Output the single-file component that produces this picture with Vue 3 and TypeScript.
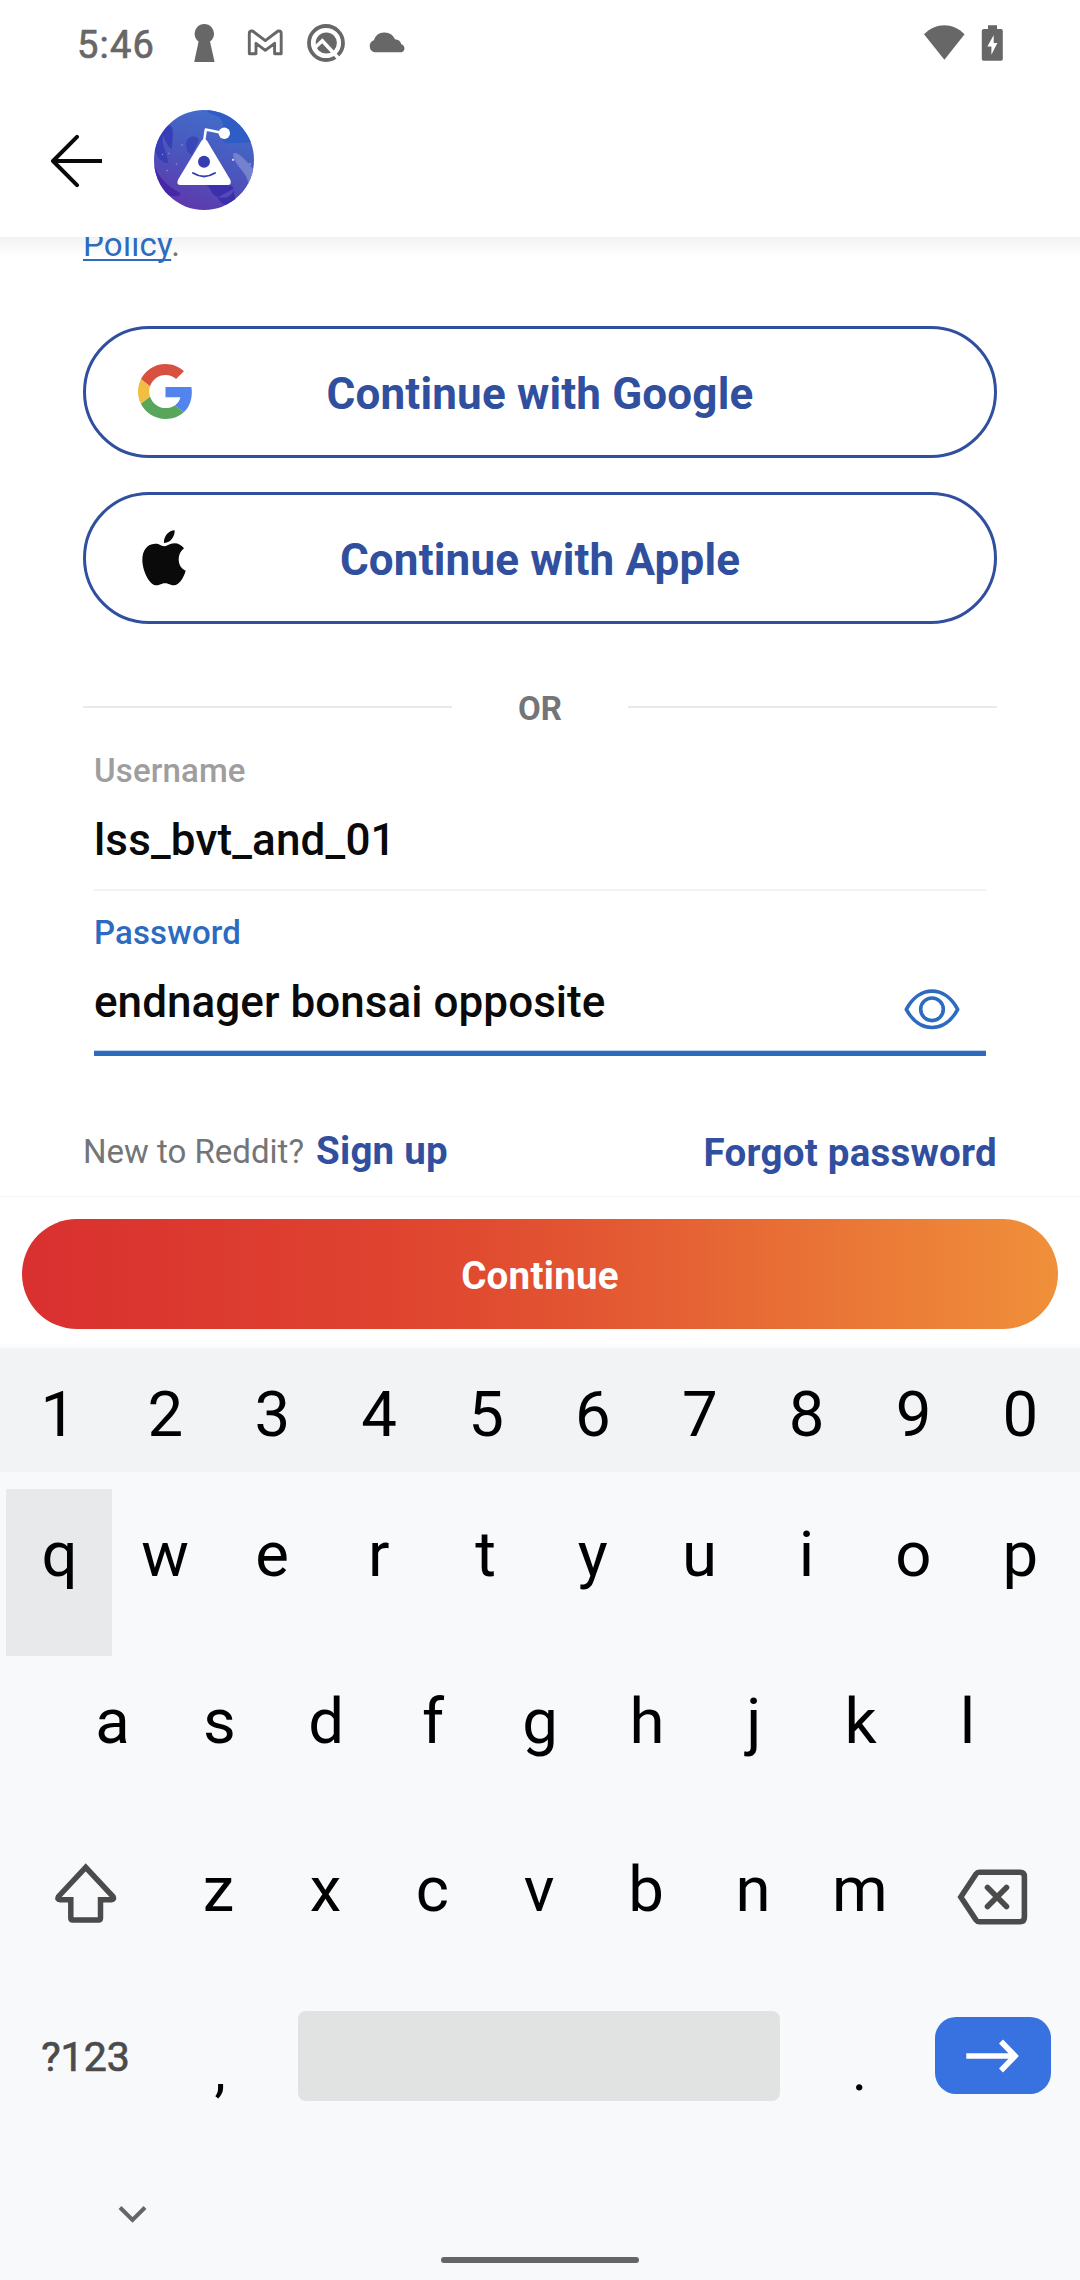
<script setup lang="ts">
const digits: string[] = '1234567890'.split('')
const topRow: string[] = 'qwertyuiop'.split('')
const homeRow: string[] = 'asdfghjkl'.split('')
const bottomRow: string[] = 'zxcvbnm'.split('')
</script>

<template>
  <div class="screen">
    <div class="status">
      <span class="clock">5:46</span>
      <svg class="i-key" width="22" height="40" viewBox="193 23 22 40" fill="#676767">
        <path d="M198.6 41.5A9.7 9.7 0 1 1 210 41.5L214.6 62H194.2Z" />
      </svg>
      <svg class="i-mail" width="36" height="28" viewBox="247 28 36 28" fill="none" stroke="#676767" stroke-width="2.9" stroke-linejoin="round">
        <path d="M249.3 33.5Q249.3 31 251.6 31H252.6L265.3 40.6L278 31H279Q281.2 31 281.2 33.5V53.8H274.6V43.3L265.3 50.3L256 43.3V53.8H249.3Z" />
      </svg>
      <svg class="i-q" width="40" height="40" viewBox="306 23 40 40" fill="none">
        <circle cx="326" cy="43" r="17" stroke="#676767" stroke-width="3.800" />
        <circle cx="326.300" cy="43" r="10.600" fill="#676767" />
        <path d="M314.500 48L322.300 40.800L341.500 61.500" stroke="#fff" stroke-width="3.600" />
      </svg>
      <svg class="i-cloud" width="38" height="22" viewBox="368 31 38 22" fill="#676767">
        <path d="M374.5 52.3A6.3 6.3 0 0 1 373.8 40.3A11.4 11.4 0 0 1 395 39.3A6.9 6.9 0 0 1 401.3 44.2A4.3 4.3 0 0 1 401.8 52.3Z" />
      </svg>
      <svg class="i-wifi" width="42" height="36" viewBox="923 24 42 36" fill="#676767">
        <path d="M924 34.3C936 22.3 952.6 22.3 964.6 34.3L944.4 59.7Z" />
      </svg>
      <svg class="i-bat" width="22" height="37" viewBox="981 25 22 37">
        <path d="M988 25.3H997V29H1001Q1002.8 29 1002.8 31V59Q1002.8 60.8 1001 60.8H983.7Q981.8 60.8 981.8 59V31Q981.8 29 983.7 29H988Z" fill="#676767" />
        <path d="M993.7 35V43H997.4L991.4 54.8V46.6H987.4Z" fill="#fff" />
      </svg>
    </div>

    <header class="bar">
      <svg width="54" height="54" viewBox="50 133.500 54 54" fill="none" stroke="#0a0a0a" stroke-width="4">
        <path d="M52.500 160.500H102" />
        <path d="M77 136.300L53 160.500L77 184.700" stroke-linecap="round" stroke-linejoin="round" />
      </svg>
      <svg class="avatar" width="100" height="100" viewBox="0 0 100 100">
        <defs>
          <linearGradient id="sky" x1="0.7" y1="0" x2="0.3" y2="1">
            <stop offset="0" stop-color="#416fcb" />
            <stop offset="0.5" stop-color="#4a57bd" />
            <stop offset="1" stop-color="#6037ad" />
          </linearGradient>
          <clipPath id="disc"><circle cx="50" cy="50" r="50" /></clipPath>
        </defs>
        <g clip-path="url(#disc)">
          <rect width="100" height="100" fill="url(#sky)" />
          <path d="M53 0C56 7 67 3 69 14C70 22 65 29 71 33C80 34 90 32 100 32V0Z" fill="#2f5dc5" />
          <path d="M16 15C21 19 18 28 18 39C13 37 12 30 9 26C7 36 14 44 14 53C8 54 3 46 0 40V20Z" fill="#373fb8" />
          <path d="M32 34C32 26 42 24 45 30L38 45C34 44 32 39 32 34Z" fill="#3946b8" />
          <path d="M0 55C5 68 13 76 26 83C28 87 19 87 14 85L0 72Z" fill="#4527a7" />
          <path d="M51 75C58 76 55 84 64 87C71 90 81 86 79 77C76 74 66 75 51 75ZM64 87L79 79L82 92L72 95C68 94 64 90 64 87Z" fill="#3b2fac" />
          <path d="M79 45C80 40 88 45 99 59V75L94 74C95 64 80 55 79 45Z" fill="#7381cf" />
          <g fill="#8797df">
            <circle cx="28" cy="35" r=".8" /><circle cx="8.500" cy="44.500" r=".7" />
            <circle cx="15" cy="43.500" r=".7" /><circle cx="22.500" cy="54" r=".8" />
            <circle cx="13" cy="60.500" r=".8" /><circle cx="96" cy="54" r="1" />
          </g>
          <circle cx="79" cy="49.800" r="1.100" fill="#dfe5fb" />
        </g>
        <path d="M50 32L51.800 19.500L70 23.300" fill="none" stroke="#fff" stroke-width="2.500" stroke-linejoin="round" />
        <circle cx="70.300" cy="23.300" r="5.700" fill="#fff" />
        <path d="M47.500 30.800Q50 27 53 30.800L76.300 69.800Q78 75 73.500 75H26.500Q22 75 24 69.800Z" fill="#fff" />
        <circle cx="50" cy="51.700" r="6" fill="#353db3" />
        <path d="M39 63Q50 69.800 61 63" fill="none" stroke="#353db3" stroke-width="2" stroke-linecap="round" />
      </svg>
    </header>

    <main class="content">
      <p class="policy"><a>Policy</a>.</p>
      <div class="providers">
        <button class="provider">
          <svg class="p-icon" width="55" height="55" viewBox="0 0 48 48">
            <path fill="#d85140" d="M24 9.500c3.540 0 6.710 1.220 9.210 3.600l6.850-6.850C35.900 2.380 30.470 0 24 0 14.620 0 6.510 5.380 2.560 13.220l7.980 6.190C12.430 13.720 17.740 9.500 24 9.500z" />
            <path fill="#5383ec" d="M46.980 24.550c0-1.570-.15-3.090-.38-4.550H24v9.020h12.940c-.58 2.960-2.260 5.480-4.780 7.180l7.730 6c4.510-4.180 7.090-10.360 7.090-17.650z" />
            <path fill="#f1bd42" d="M10.530 28.590c-.48-1.450-.76-2.990-.76-4.590s.27-3.140.76-4.590l-7.980-6.190C.92 16.460 0 20.120 0 24c0 3.880.92 7.540 2.560 10.780l7.970-6.190z" />
            <path fill="#58a55c" d="M24 48c6.480 0 11.930-2.130 15.890-5.810l-7.730-6c-2.150 1.450-4.920 2.300-8.160 2.300-6.260 0-11.570-4.220-13.470-9.910l-7.980 6.190C6.510 42.620 14.620 48 24 48z" />
          </svg>
          <span>Continue with Google</span>
        </button>
        <button class="provider">
          <svg class="p-icon apple" width="44" height="56" viewBox="247 689 132 168" fill="#0a0a0a">
            <path d="M315 738C301 735 297 729 286 730C262 731 248 750 248 778C248 812 270 855 290 855C302 855 305 849 316 849C327 849 331 855 343 855C358 855 372 832 378 811C364 806 357 792 357 777C357 763 363 752 373 744C366 735 357 729 344 729C330 729 322 738 315 738Z" />
            <path d="M345 690C346 708 332 729 313 728C311 708 328 690 345 690Z" />
          </svg>
          <span>Continue with Apple</span>
        </button>
      </div>

      <div class="divider"><i></i><span>OR</span><i></i></div>

      <div class="field">
        <label>Username</label>
        <div class="value">lss_bvt_and_01</div>
      </div>
      <div class="field active">
        <label>Password</label>
        <div class="value">
          <span>endnager bonsai opposite</span>
          <svg width="56" height="42" viewBox="903.500 988 56 42" fill="none" stroke="#2d6bc1" stroke-width="3.600">
            <path d="M905.800 1009.300C918.500 985 944.500 985 957.200 1009.300C944.500 1033.600 918.500 1033.600 905.800 1009.300Z" stroke-linejoin="round" />
            <circle cx="931.500" cy="1009.300" r="11.300" />
          </svg>
        </div>
      </div>

      <div class="links">
        <span class="new">New to Reddit?</span>
        <a class="signup">Sign up</a>
        <a class="forgot">Forgot password</a>
      </div>
    </main>

    <footer class="action"><button>Continue</button></footer>

    <section class="keyboard">
      <div class="row numbers"><span v-for="k in digits" :key="k" class="key">{{ k }}</span></div>
      <div class="row"><span v-for="k in topRow" :key="k" class="key" :class="{ pressed: k === 'q' }">{{ k }}</span></div>
      <div class="row home"><span v-for="k in homeRow" :key="k" class="key">{{ k }}</span></div>
      <div class="row">
        <span class="wide shift">
          <svg width="62" height="61" viewBox="55 1862.500 62 61" fill="none" stroke="#4b4b4b" stroke-width="5.500">
            <path d="M85.700 1866.800L58.500 1896Q56.800 1899.300 60 1899.300H70.800V1917.500Q70.800 1919.500 72.800 1919.500H98.500Q100.500 1919.500 100.500 1917.500V1899.300H111.500Q114.500 1899.300 113 1896Z" stroke-linejoin="miter" />
          </svg>
        </span>
        <span v-for="k in bottomRow" :key="k" class="key">{{ k }}</span>
        <span class="wide back">
          <svg width="71" height="56" viewBox="957 1868.500 71 56" fill="none" stroke="#4b4b4b" stroke-width="5.600">
            <path d="M960.800 1896.500L976 1873.500Q977.200 1871.800 979.200 1871.800H1020Q1024.400 1871.800 1024.400 1876.200V1916.800Q1024.400 1921.200 1020 1921.200H979.200Q977.200 1921.200 976 1919.500Z" />
            <path d="M987.500 1887L1006.500 1906M1006.500 1887L987.500 1906" stroke-linecap="round" />
          </svg>
        </span>
      </div>
      <div class="row last">
        <span class="sym">?123</span>
        <span class="punct comma">,</span>
        <span class="space"></span>
        <span class="punct dot">.</span>
        <span class="enter">
          <svg width="54" height="36" viewBox="966 2038 54 36" fill="none" stroke="#fff" stroke-width="5.600">
            <path d="M966.300 2056H1014M1001 2041.500L1015 2056L1001 2070.500" />
          </svg>
        </span>
      </div>
      <div class="nav">
        <svg width="30" height="20" viewBox="118 2205 30 20" fill="none" stroke="#666" stroke-width="4">
          <path d="M120 2207.500L132.500 2220L145 2207.500" />
        </svg>
        <span class="pill"></span>
      </div>
    </section>
  </div>
</template>

<style>
html, body { margin: 0; background: #fff; }
</style>

<style scoped>
.screen {
  width: 1080px; height: 2280px; display: flex; flex-direction: column;
  background: #fff; overflow: hidden; font-family: Roboto, "Noto Sans", sans-serif;
}
svg { display: block; flex: none; }
button { border: 0; padding: 0; margin: 0; font-family: inherit; background: none; }

.status { height: 86px; display: flex; align-items: flex-start; padding-left: 77px; flex: none; }
.clock { width: 116px; line-height: 91px; font-size: 38px; letter-spacing: 1.2px; color: #676767; -webkit-text-stroke: .7px #676767; }
.i-key { margin-top: 23px; }
.i-mail { margin: 28px 0 0 32px; }
.i-q { margin: 23px 0 0 23px; }
.i-cloud { margin: 31px 0 0 22px; }
.i-wifi { margin: 24px 0 0 517px; }
.i-bat { margin: 25px 0 0 16px; }

.bar { height: 151px; flex: none; box-sizing: border-box; padding: 24px 0 0 50px; display: flex; align-items: flex-start; }
.bar svg:first-child { margin-top: 23.5px; }
.avatar { margin-left: 50px; }

.content {
  height: 959px; flex: none; box-sizing: border-box; padding: 0 83px; overflow: hidden;
  display: flex; flex-direction: column;
  background: linear-gradient(#f2f2f2, #fafafa 12px, #fff 21px) no-repeat;
}
.policy { margin: -12px 0 0; height: 40px; line-height: 40px; font-size: 33px; letter-spacing: .25px; color: #737577; flex: none; }
.policy a { color: #2d6bc1; text-decoration: underline; text-decoration-thickness: 2px; text-underline-offset: 3px; text-decoration-skip-ink: none; }
.providers { margin-top: 61px; display: flex; flex-direction: column; gap: 34px; }
.provider {
  height: 132px; border: 3px solid #304f9e; border-radius: 66px; box-sizing: border-box;
  display: flex; align-items: center; font-size: 44px; font-weight: 700; letter-spacing: .17px; color: #304f9e;
}
.provider span { flex: 1; text-align: center; padding: 3px 107px 0 0; }
.p-icon { margin: 0 0 2px 52px; }
.apple { margin: 0 7px 1px 56px; }

.divider { margin-top: 65px; display: flex; justify-content: space-between; height: 40px; line-height: 40px; font-size: 33px; font-weight: 700; color: #737577; }
.divider i { width: 369px; height: 2px; margin-top: 17px; background: #e9ebeb; }

.field { margin: 21px 11px 0; height: 141px; box-sizing: border-box; border-bottom: 2px solid #f1f3f3; font-weight: 500; flex: none; }
.field label { display: block; font-size: 33px; line-height: 42px; letter-spacing: .15px; color: #9e9e9e; }
.field .value { margin-top: 22px; font-size: 44px; line-height: 52px; letter-spacing: .15px; color: #0a0a0a; display: flex; justify-content: space-between; }
.field.active { margin-top: 22px; height: 143px; border-bottom: 5px solid #2d6bc1; box-shadow: inset 0 -1px #c3d5ed; }
.field.active label { color: #2d6bc1; line-height: 40px; }
.field.active .value { margin-top: 23px; letter-spacing: .05px; }
.field svg { margin: 12px 26.5px 0 0; }

.links { margin-top: 64px; display: flex; align-items: flex-start; color: #304f9e; font-weight: 700; font-size: 38.5px; letter-spacing: .25px; }
.new { font-size: 33px; line-height: 63px; font-weight: 400; letter-spacing: 0; color: #737577; }
.signup { line-height: 62px; margin-left: 12px; }
.forgot { line-height: 66px; margin-left: auto; }

.action { height: 152px; flex: none; box-sizing: border-box; border-top: 1px solid #f3f5f5; padding: 22px 22px 0; background: linear-gradient(#fff 146px, #f7f8f9 152px); }
.action button {
  width: 100%; height: 110px; border-radius: 55px; color: #fff; font-size: 38.5px; font-weight: 700; letter-spacing: .25px; padding-top: 3px;
  background: linear-gradient(90deg, #d93030, #df432f 35%, #e25432 53%, #f0903a);
}

.keyboard { flex: 1; background: #f8f9fb; color: #000; display: flex; flex-direction: column; }
.row { display: flex; height: 167.5px; padding: 0 5.5px; font-size: 63.500px; line-height: 131px; flex: none; }
.numbers { height: 124px; line-height: 134px; background: linear-gradient(#f4f5f6, #f1f3f4 3px); margin-bottom: 17px; }
.numbers .key { text-indent: -1px; }
.key { flex: none; width: 106.9px; text-align: center; text-indent: -1.5px; }
.key.pressed { background: #e7e9eb; height: 167px; text-indent: 1px; }
.home { padding-left: 59px; line-height: 129px; }
.home .key { text-indent: 0; }
.wide { flex: none; width: 160.35px; }
.shift svg { margin: 38.5px 0 0 49.5px; }
.back svg { margin: 44.5px 0 0 43px; }
.last { height: 198px; }
.sym { width: 160px; text-align: center; font-size: 41px; line-height: 131px; color: #4b4b4b; -webkit-text-stroke: .7px #4b4b4b; }
.punct { width: 107px; text-align: center; font-size: 57px; line-height: 157px; }
.comma { text-indent: 2px; }
.space { margin: 19.5px 0 0 25.5px; width: 482px; height: 90px; border-radius: 8px; background: #e1e3e2; }
.dot { margin-left: 26px; }
.enter { margin: 25.5px 0 0 22px; width: 116px; height: 77px; border-radius: 21px; background: #3871e0; display: flex; align-items: center; justify-content: center; }
.nav { display: flex; align-items: flex-start; padding: 15.5px 0 0 118px; }
.pill { margin: 52px 0 0 293px; width: 198px; height: 6px; border-radius: 3px; background: #646665; }
</style>
